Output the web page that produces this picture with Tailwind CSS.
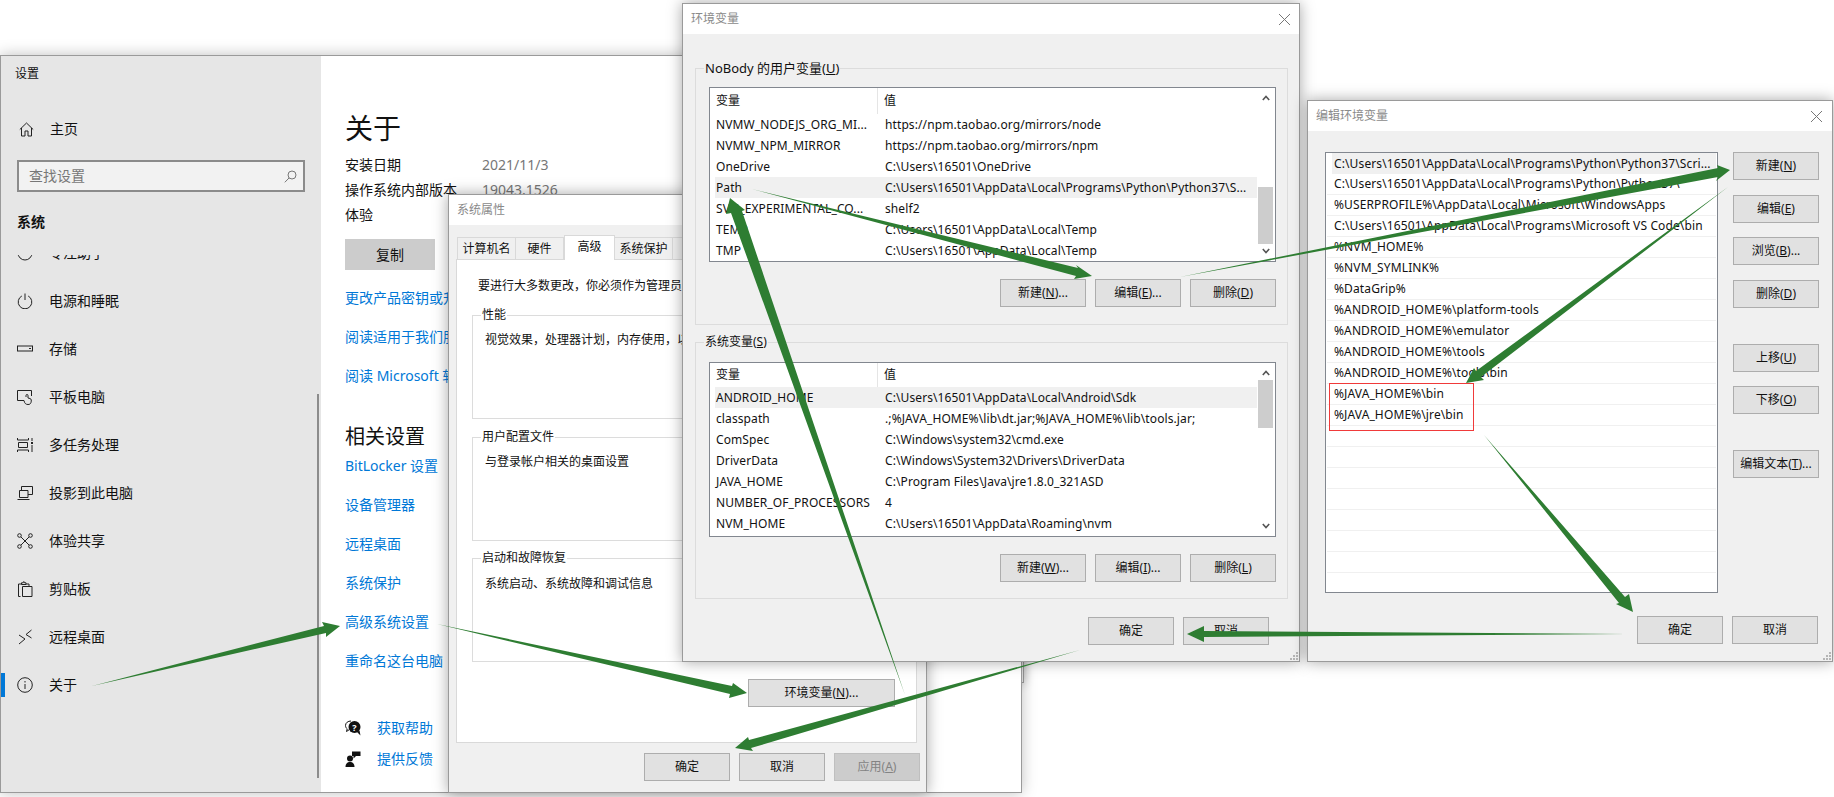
<!doctype html>
<html lang="zh-CN"><head><meta charset="utf-8"><title>环境变量配置</title>
<script src="https://cdn.jsdelivr.net/npm/@tailwindcss/browser@4"></script></head>
<body class="bg-white">
<div class="relative w-[1834px] h-[797px] overflow-hidden bg-white text-[12px] leading-none text-[#111] font-['Noto_Sans','Noto_Sans_CJK_SC',sans-serif]">

<!-- window behind settings -->
<div class="absolute left-[600px] top-[100px] w-[424px] h-[583px] bg-[#f0f0f0] border border-[#a0a0a0] shadow-[0_0_10px_rgba(0,0,0,0.3)]"></div>

<!-- settings -->
<div class="absolute left-0 top-[55px] w-[1022px] h-[738px] flex bg-white border border-[#9a9a9a] shadow-[0_0_14px_rgba(0,0,0,0.25)]">
  <aside class="relative w-[320px] h-full bg-[#e6e6e6] flex flex-col shrink-0">
    <div class="h-[35px] pl-[14px] flex items-center">设置</div>
    <div class="mt-[14px] h-[48px] pl-[18px] flex items-center gap-[16px] text-[14px]">
      <svg class="w-[15px] h-[15px]" viewBox="0 0 15 15" fill="none" stroke="#222"><path d="M.8 7.500 7.500 1l6.700 6.500M2.500 6v8h3.500V9h3v5h3.500V6"/></svg><span>主页</span>
    </div>
    <div class="mt-[7px] ml-[16px] w-[288px] h-[32px] border-2 border-[#8b8b8b] bg-[#f2f2f2] flex items-center justify-between pl-[10px] pr-[6px] text-[14px] text-[#777]">
      <span>查找设置</span>
      <svg class="w-[13px] h-[13px]" viewBox="0 0 13 13" fill="none" stroke="#777"><circle cx="8" cy="5" r="4"/><path d="M5 8 .8 12.300"/></svg>
    </div>
    <div class="mt-[18px] h-[24px] pl-[16px] flex items-center text-[14px] font-bold">系统</div>
    <nav class="mt-[21px] flex-1 overflow-hidden text-[14px]">
      <div class="-mt-[26px] flex flex-col">
        <div class="h-[48px] pl-[16px] flex items-center gap-[16px]"><svg class="w-[16px] h-[16px]" viewBox="0 0 16 16" fill="none" stroke="#222"><path d="M1 8a7 7 0 0 0 14 0"/></svg><span>专注助手</span></div>
        <div class="h-[48px] pl-[16px] flex items-center gap-[16px]"><svg class="w-[16px] h-[16px]" viewBox="0 0 16 16" fill="none" stroke="#222"><path d="M4.800 3a6.800 6.800 0 1 0 6.400 0M8 .5V7"/></svg><span>电源和睡眠</span></div>
        <div class="h-[48px] pl-[16px] flex items-center gap-[16px]"><svg class="w-[16px] h-[16px]" viewBox="0 0 16 16" fill="none" stroke="#222"><rect x=".5" y="5" width="15" height="5"/><path d="M12 7.500h2"/></svg><span>存储</span></div>
        <div class="h-[48px] pl-[16px] flex items-center gap-[16px]"><svg class="w-[16px] h-[16px]" viewBox="0 0 16 16" fill="none" stroke="#222"><path d="M7 11.500H.5v-10h14V7"/><path d="M9 8V6.500a1 1 0 0 1 2 0V9l2 .5c1.500.5 1.500 2 1 4-.5 1.500-1.500 2-3 2-2 0-3.500-1-4-4"/></svg><span>平板电脑</span></div>
        <div class="h-[48px] pl-[16px] flex items-center gap-[16px]"><svg class="w-[16px] h-[16px]" viewBox="0 0 16 16" fill="none" stroke="#222"><path d="M.5 1v2h11V1M1.500 5.500h9v5h-9zM.5 15v-2h11v2M15 1v3M15 8v7"/><rect x="14" y="5" width="2" height="2" fill="#222" stroke="none"/></svg><span>多任务处理</span></div>
        <div class="h-[48px] pl-[16px] flex items-center gap-[16px]"><svg class="w-[16px] h-[16px]" viewBox="0 0 16 16" fill="none" stroke="#222"><path d="M4.500 5V1.500h11v8H11"/><path d="M2.500 5.500h8.500v7H2.500zM.5 14.500h12"/></svg><span>投影到此电脑</span></div>
        <div class="h-[48px] pl-[16px] flex items-center gap-[16px]"><svg class="w-[16px] h-[16px]" viewBox="0 0 16 16" fill="none" stroke="#222"><circle cx="2.500" cy="2.500" r="1.800"/><circle cx="13.500" cy="2.500" r="1.800"/><circle cx="2.500" cy="13.500" r="1.800"/><circle cx="13.500" cy="13.500" r="1.800"/><path d="m4 4 8 8M12 4l-8 8"/></svg><span>体验共享</span></div>
        <div class="h-[48px] pl-[16px] flex items-center gap-[16px]"><svg class="w-[16px] h-[16px]" viewBox="0 0 16 16" fill="none" stroke="#222"><path d="M3.500 15.500H1.500V3h3M9 3h3v2"/><path d="M4.500 3.500V1.800h1.700L6.800 .5l.8 1.300H9v1.700zM5.500 5.500h9.500v10H5.500z"/></svg><span>剪贴板</span></div>
        <div class="h-[48px] pl-[16px] flex items-center gap-[16px]"><svg class="w-[16px] h-[16px]" viewBox="0 0 16 16" fill="none" stroke="#222"><path d="m2 6 6 4-6 5M14.500 1 9 5.500l5.500 3.500"/></svg><span>远程桌面</span></div>
        <div class="relative h-[48px] pl-[16px] flex items-center gap-[16px]"><span class="absolute left-0 top-[12px] w-[4px] h-[24px] bg-[#0078d7]"></span><svg class="w-[16px] h-[16px]" viewBox="0 0 16 16" fill="none" stroke="#222"><circle cx="8" cy="8" r="7.300"/><path d="M8 7v5M8 4v1.500"/></svg><span>关于</span></div>
      </div>
    </nav>
    <span class="absolute left-[316px] top-[338px] w-[2px] h-[384px] bg-[#8c8c8c]"></span>
  </aside>
  <main class="flex-1 pl-[24px] flex flex-col items-start text-[14px] whitespace-nowrap">
    <h1 class="mt-[54px] h-[36px] flex items-center text-[28px]">关于</h1>
    <div class="mt-[6px] h-[25px] flex items-center"><span class="w-[137px]">安装日期</span><span class="text-[#777]">2021/11/3</span></div>
    <div class="h-[25px] flex items-center"><span class="w-[137px]">操作系统内部版本</span><span class="text-[#777]">19043.1526</span></div>
    <div class="h-[25px] flex items-center">体验</div>
    <div class="mt-[12px] w-[90px] h-[31px] bg-[#cccccc] flex items-center justify-center">复制</div>
    <a class="mt-[17px] h-[22px] flex items-center text-[#0078d7]">更改产品密钥或升级 Windows</a>
    <a class="mt-[17px] h-[22px] flex items-center text-[#0078d7]">阅读适用于我们服务的 Microsoft 服务协议</a>
    <a class="mt-[17px] h-[22px] flex items-center text-[#0078d7]">阅读 Microsoft 软件许可条款</a>
    <h2 class="mt-[36px] h-[28px] flex items-center text-[20px]">相关设置</h2>
    <a class="mt-[1px] h-[28px] flex items-center text-[#0078d7]">BitLocker 设置</a>
    <a class="mt-[11px] h-[28px] flex items-center text-[#0078d7]">设备管理器</a>
    <a class="mt-[11px] h-[28px] flex items-center text-[#0078d7]">远程桌面</a>
    <a class="mt-[11px] h-[28px] flex items-center text-[#0078d7]">系统保护</a>
    <a class="mt-[11px] h-[28px] flex items-center text-[#0078d7]">高级系统设置</a>
    <a class="mt-[11px] h-[28px] flex items-center text-[#0078d7]">重命名这台电脑</a>
    <div class="mt-[39px] h-[28px] flex items-center gap-[16px] text-[#0078d7]">
      <svg class="w-[16px] h-[16px]" viewBox="0 0 16 16"><path d="M6 1C3 1 .5 2.800.5 5.500c0 1.500.8 2.700 1.700 3.400L1.500 11.500 4.500 9.500" fill="none" stroke="#111"/><circle cx="9.500" cy="7" r="6" fill="#111"/><path d="m12 12 3.500 3.500-1-5z" fill="#111"/><text x="9.500" y="10.500" font-size="9" font-weight="700" fill="#fff" text-anchor="middle">?</text></svg><span>获取帮助</span>
    </div>
    <div class="mt-[3px] h-[28px] flex items-center gap-[16px] text-[#0078d7]">
      <svg class="w-[16px] h-[16px]" viewBox="0 0 16 16" fill="#111"><circle cx="5" cy="7.500" r="3"/><path d="M.5 16c0-3.500 2-5 4.500-5s4.500 1.500 4.500 5z"/><path d="M7 .5h8.500V5H11L8.500 7.500V5H7z"/></svg><span>提供反馈</span>
    </div>
  </main>
</div>

<!-- system properties -->
<div class="absolute left-[448px] top-[194px] w-[479px] h-[599px] bg-[#f0f0f0] border border-[#9a9a9a] shadow-[0_0_14px_rgba(0,0,0,0.35)] flex flex-col">
  <div class="h-[30px] bg-white flex items-center pl-[8px] text-[#8a8a8a] shrink-0">系统属性</div>
  <div class="mt-[10px] ml-[8px] flex items-end h-[24px] shrink-0">
    <span class="w-[59px] h-[22px] bg-[#f0f0f0] border border-b-0 border-[#d9d9d9] flex items-center justify-center">计算机名</span>
    <span class="w-[48px] h-[22px] bg-[#f0f0f0] border border-b-0 border-l-0 border-[#d9d9d9] flex items-center justify-center">硬件</span>
    <span class="w-[51px] h-[25px] bg-white border border-b-0 border-[#d9d9d9] flex items-center justify-center pb-[3px] z-10 -mb-px">高级</span>
    <span class="w-[58px] h-[22px] bg-[#f0f0f0] border border-b-0 border-l-0 border-[#d9d9d9] flex items-center justify-center">系统保护</span>
    <span class="w-[48px] h-[22px] bg-[#f0f0f0] border border-b-0 border-l-0 border-[#d9d9d9] flex items-center justify-center">远程</span>
  </div>
  <div class="ml-[7px] w-[461px] h-[484px] bg-white border border-[#d9d9d9] shrink-0 flex flex-col px-[15px]">
    <p class="mt-[19px] h-[14px] pl-[6px] flex items-center">要进行大多数更改，你必须作为管理员登录。</p>
    <div class="relative mt-[22px] h-[104px] border border-[#dcdcdc] pl-[12px] pt-[18px]"><span class="absolute left-[8px] -top-[7px] bg-white px-[1px]">性能</span>视觉效果，处理器计划，内存使用，以及虚拟内存</div>
    <div class="relative mt-[18px] h-[104px] border border-[#dcdcdc] pl-[12px] pt-[18px]"><span class="absolute left-[8px] -top-[7px] bg-white px-[1px]">用户配置文件</span>与登录帐户相关的桌面设置</div>
    <div class="relative mt-[17px] h-[104px] border border-[#dcdcdc] pl-[12px] pt-[19px]"><span class="absolute left-[8px] -top-[7px] bg-white px-[1px]">启动和故障恢复</span>系统启动、系统故障和调试信息</div>
    <div class="mt-[17px] self-end mr-[6px] w-[147px] h-[28px] bg-[#e1e1e1] border border-[#adadad] flex items-center justify-center">环境变量(<u>N</u>)...</div>
  </div>
  <div class="mt-[10px] ml-[195px] flex gap-[9px]">
    <span class="w-[86px] h-[28px] bg-[#e1e1e1] border border-[#adadad] flex items-center justify-center">确定</span>
    <span class="w-[86px] h-[28px] bg-[#e1e1e1] border border-[#adadad] flex items-center justify-center">取消</span>
    <span class="w-[86px] h-[28px] bg-[#cccccc] border border-[#bfbfbf] flex items-center justify-center text-[#838383]">应用(<u>A</u>)</span>
  </div>
</div>

<!-- environment variables -->
<div class="absolute left-[682px] top-[3px] w-[618px] h-[659px] bg-[#f0f0f0] border border-[#9a9a9a] shadow-[0_0_14px_rgba(0,0,0,0.35)] flex flex-col">
  <div class="h-[30px] bg-white flex items-center justify-between pl-[8px] pr-[9px] text-[#8a8a8a] shrink-0"><span>环境变量</span><svg class="w-[11px] h-[11px]" viewBox="0 0 11 11" stroke="#777"><path d="m0 0 11 11M11 0 0 11"/></svg></div>
  <section class="relative mt-[34px] ml-[12px] w-[593px] h-[257px] border border-[#dcdcdc] pt-[18px] pl-[13px]">
    <span class="absolute left-[8px] -top-[7px] bg-[#f0f0f0] px-[1px] text-[13px]">NoBody 的用户变量(<u>U</u>)</span>
    <div class="relative w-[567px] h-[175px] bg-white border border-[#82878f] pl-[5px] flex flex-col whitespace-nowrap tracking-[0.1px]">
      <div class="h-[26px] flex items-center shrink-0"><span class="w-[163px] h-full pl-[1px] flex items-center border-r border-[#e5e5e5]">变量</span><span class="pl-[6px]">值</span></div>
      <div class="h-[21px] flex items-center"><span class="w-[170px] pl-[1px] overflow-hidden">NVMW_NODEJS_ORG_MI...</span><span>https://npm.taobao.org/mirrors/node</span></div>
      <div class="h-[21px] flex items-center"><span class="w-[170px] pl-[1px]">NVMW_NPM_MIRROR</span><span>https://npm.taobao.org/mirrors/npm</span></div>
      <div class="h-[21px] flex items-center"><span class="w-[170px] pl-[1px]">OneDrive</span><span>C:\Users\16501\OneDrive</span></div>
      <div class="h-[21px] w-[542px] flex items-center bg-[#f0f0f0]"><span class="w-[170px] pl-[1px]">Path</span><span>C:\Users\16501\AppData\Local\Programs\Python\Python37\S...</span></div>
      <div class="h-[21px] flex items-center"><span class="w-[170px] pl-[1px]">SVN_EXPERIMENTAL_CO...</span><span>shelf2</span></div>
      <div class="h-[21px] flex items-center"><span class="w-[170px] pl-[1px]">TEMP</span><span>C:\Users\16501\AppData\Local\Temp</span></div>
      <div class="h-[21px] flex items-center"><span class="w-[170px] pl-[1px]">TMP</span><span>C:\Users\16501\AppData\Local\Temp</span></div>
      <div class="absolute right-0 top-0 bottom-0 w-[18px] bg-white flex flex-col items-center justify-between py-[7px]">
        <svg class="w-[8px] h-[6px]" viewBox="0 0 8 6" fill="none" stroke="#555" stroke-width="1.600"><path d="m.8 5 3.200-3.500L7.200 5"/></svg>
        <svg class="w-[8px] h-[6px]" viewBox="0 0 8 6" fill="none" stroke="#555" stroke-width="1.600"><path d="m.8 1 3.200 3.500L7.200 1"/></svg>
        <span class="absolute left-[1px] top-[99px] w-[15px] h-[57px] bg-[#cdcdcd]"></span>
      </div>
    </div>
    <div class="mt-[17px] ml-[291px] flex gap-[9px]">
      <span class="w-[86px] h-[28px] bg-[#e1e1e1] border border-[#adadad] flex items-center justify-center">新建(<u>N</u>)...</span>
      <span class="w-[86px] h-[28px] bg-[#e1e1e1] border border-[#adadad] flex items-center justify-center">编辑(<u>E</u>)...</span>
      <span class="w-[86px] h-[28px] bg-[#e1e1e1] border border-[#adadad] flex items-center justify-center">删除(<u>D</u>)</span>
    </div>
  </section>
  <section class="relative mt-[17px] ml-[12px] w-[593px] h-[257px] border border-[#dcdcdc] pt-[19px] pl-[13px]">
    <span class="absolute left-[8px] -top-[7px] bg-[#f0f0f0] px-[1px]">系统变量(<u>S</u>)</span>
    <div class="relative w-[567px] h-[175px] bg-white border border-[#82878f] pl-[5px] flex flex-col whitespace-nowrap tracking-[0.1px]">
      <div class="h-[24px] flex items-center shrink-0"><span class="w-[163px] h-full pl-[1px] flex items-center border-r border-[#e5e5e5]">变量</span><span class="pl-[6px]">值</span></div>
      <div class="h-[21px] w-[542px] flex items-center bg-[#f0f0f0]"><span class="w-[170px] pl-[1px]">ANDROID_HOME</span><span>C:\Users\16501\AppData\Local\Android\Sdk</span></div>
      <div class="h-[21px] flex items-center"><span class="w-[170px] pl-[1px]">classpath</span><span>.;%JAVA_HOME%\lib\dt.jar;%JAVA_HOME%\lib\tools.jar;</span></div>
      <div class="h-[21px] flex items-center"><span class="w-[170px] pl-[1px]">ComSpec</span><span>C:\Windows\system32\cmd.exe</span></div>
      <div class="h-[21px] flex items-center"><span class="w-[170px] pl-[1px]">DriverData</span><span>C:\Windows\System32\Drivers\DriverData</span></div>
      <div class="h-[21px] flex items-center"><span class="w-[170px] pl-[1px]">JAVA_HOME</span><span>C:\Program Files\Java\jre1.8.0_321ASD</span></div>
      <div class="h-[21px] flex items-center"><span class="w-[170px] pl-[1px]">NUMBER_OF_PROCESSORS</span><span>4</span></div>
      <div class="h-[21px] flex items-center"><span class="w-[170px] pl-[1px]">NVM_HOME</span><span>C:\Users\16501\AppData\Roaming\nvm</span></div>
      <div class="absolute right-0 top-0 bottom-0 w-[18px] bg-white flex flex-col items-center justify-between py-[7px]">
        <svg class="w-[8px] h-[6px]" viewBox="0 0 8 6" fill="none" stroke="#555" stroke-width="1.600"><path d="m.8 5 3.200-3.500L7.200 5"/></svg>
        <svg class="w-[8px] h-[6px]" viewBox="0 0 8 6" fill="none" stroke="#555" stroke-width="1.600"><path d="m.8 1 3.200 3.500L7.200 1"/></svg>
        <span class="absolute left-[1px] top-[17px] w-[15px] h-[48px] bg-[#cdcdcd]"></span>
      </div>
    </div>
    <div class="mt-[17px] ml-[291px] flex gap-[9px]">
      <span class="w-[86px] h-[28px] bg-[#e1e1e1] border border-[#adadad] flex items-center justify-center">新建(<u>W</u>)...</span>
      <span class="w-[86px] h-[28px] bg-[#e1e1e1] border border-[#adadad] flex items-center justify-center">编辑(<u>I</u>)...</span>
      <span class="w-[86px] h-[28px] bg-[#e1e1e1] border border-[#adadad] flex items-center justify-center">删除(<u>L</u>)</span>
    </div>
  </section>
  <div class="mt-[18px] ml-[405px] flex gap-[9px]">
    <span class="w-[86px] h-[28px] bg-[#e1e1e1] border border-[#adadad] flex items-center justify-center">确定</span>
    <span class="w-[86px] h-[28px] bg-[#e1e1e1] border border-[#adadad] flex items-center justify-center">取消</span>
  </div>
  <svg class="absolute right-[1px] bottom-[1px] w-[9px] h-[9px]" viewBox="0 0 9 9" fill="#b5b5b5"><rect x="7" y="1" width="2" height="2"/><rect x="4" y="4" width="2" height="2"/><rect x="7" y="4" width="2" height="2"/><rect x="1" y="7" width="2" height="2"/><rect x="4" y="7" width="2" height="2"/><rect x="7" y="7" width="2" height="2"/></svg>
</div>

<!-- edit environment variable -->
<div class="absolute left-[1307px] top-[100px] w-[526px] h-[562px] bg-[#f0f0f0] border border-[#9a9a9a] shadow-[0_0_14px_rgba(0,0,0,0.35)] flex flex-col">
  <div class="h-[30px] bg-white flex items-center justify-between pl-[8px] pr-[10px] text-[#8a8a8a] shrink-0"><span>编辑环境变量</span><svg class="w-[11px] h-[11px]" viewBox="0 0 11 11" stroke="#777"><path d="m0 0 11 11M11 0 0 11"/></svg></div>
  <div class="mt-[21px] ml-[17px] flex items-start">
    <div class="w-[393px] h-[441px] bg-white border border-[#82878f] px-[1px] flex flex-col whitespace-nowrap tracking-[0.12px]">
      <div class="h-[21px] ml-[5px] shrink-0 pl-[2px] flex items-center bg-[#f0f0f0]">C:\Users\16501\AppData\Local\Programs\Python\Python37\Scri...</div>
      <div class="h-[21px] shrink-0 pl-[7px] flex items-center border-b border-[#f0f0f0]">C:\Users\16501\AppData\Local\Programs\Python\Python37\</div>
      <div class="h-[21px] shrink-0 pl-[7px] flex items-center border-b border-[#f0f0f0]">%USERPROFILE%\AppData\Local\Microsoft\WindowsApps</div>
      <div class="h-[21px] shrink-0 pl-[7px] flex items-center border-b border-[#f0f0f0]">C:\Users\16501\AppData\Local\Programs\Microsoft VS Code\bin</div>
      <div class="h-[21px] shrink-0 pl-[7px] flex items-center border-b border-[#f0f0f0]">%NVM_HOME%</div>
      <div class="h-[21px] shrink-0 pl-[7px] flex items-center border-b border-[#f0f0f0]">%NVM_SYMLINK%</div>
      <div class="h-[21px] shrink-0 pl-[7px] flex items-center border-b border-[#f0f0f0]">%DataGrip%</div>
      <div class="h-[21px] shrink-0 pl-[7px] flex items-center border-b border-[#f0f0f0]">%ANDROID_HOME%\platform-tools</div>
      <div class="h-[21px] shrink-0 pl-[7px] flex items-center border-b border-[#f0f0f0]">%ANDROID_HOME%\emulator</div>
      <div class="h-[21px] shrink-0 pl-[7px] flex items-center border-b border-[#f0f0f0]">%ANDROID_HOME%\tools</div>
      <div class="h-[21px] shrink-0 pl-[7px] flex items-center border-b border-[#f0f0f0]">%ANDROID_HOME%\tools\bin</div>
      <div class="h-[21px] shrink-0 pl-[7px] flex items-center border-b border-[#f0f0f0]">%JAVA_HOME%\bin</div>
      <div class="h-[21px] shrink-0 pl-[7px] flex items-center border-b border-[#f0f0f0]">%JAVA_HOME%\jre\bin</div>
      <div class="h-[21px] shrink-0 border-b border-[#f0f0f0]"></div>
      <div class="h-[21px] shrink-0 border-b border-[#f0f0f0]"></div>
      <div class="h-[21px] shrink-0 border-b border-[#f0f0f0]"></div>
      <div class="h-[21px] shrink-0 border-b border-[#f0f0f0]"></div>
      <div class="h-[21px] shrink-0 border-b border-[#f0f0f0]"></div>
      <div class="h-[21px] shrink-0 border-b border-[#f0f0f0]"></div>
      <div class="h-[21px] shrink-0 border-b border-[#f0f0f0]"></div>
    </div>
    <div class="ml-[15px] w-[86px] flex flex-col">
      <span class="h-[28px] bg-[#e1e1e1] border border-[#adadad] flex items-center justify-center">新建(<u>N</u>)</span>
      <span class="mt-[15px] h-[28px] bg-[#e1e1e1] border border-[#adadad] flex items-center justify-center">编辑(<u>E</u>)</span>
      <span class="mt-[14px] h-[28px] bg-[#e1e1e1] border border-[#adadad] flex items-center justify-center">浏览(<u>B</u>)...</span>
      <span class="mt-[15px] h-[28px] bg-[#e1e1e1] border border-[#adadad] flex items-center justify-center">删除(<u>D</u>)</span>
      <span class="mt-[36px] h-[28px] bg-[#e1e1e1] border border-[#adadad] flex items-center justify-center">上移(<u>U</u>)</span>
      <span class="mt-[14px] h-[28px] bg-[#e1e1e1] border border-[#adadad] flex items-center justify-center">下移(<u>O</u>)</span>
      <span class="mt-[36px] h-[28px] bg-[#e1e1e1] border border-[#adadad] flex items-center justify-center">编辑文本(<u>T</u>)...</span>
    </div>
  </div>
  <div class="mt-[23px] ml-[329px] flex gap-[9px]">
    <span class="w-[86px] h-[28px] bg-[#e1e1e1] border border-[#adadad] flex items-center justify-center">确定</span>
    <span class="w-[86px] h-[28px] bg-[#e1e1e1] border border-[#adadad] flex items-center justify-center">取消</span>
  </div>
  <svg class="absolute right-[1px] bottom-[1px] w-[9px] h-[9px]" viewBox="0 0 9 9" fill="#b5b5b5"><rect x="7" y="1" width="2" height="2"/><rect x="4" y="4" width="2" height="2"/><rect x="7" y="4" width="2" height="2"/><rect x="1" y="7" width="2" height="2"/><rect x="4" y="7" width="2" height="2"/><rect x="7" y="7" width="2" height="2"/></svg>
</div>

<!-- red highlight -->
<div class="absolute left-[1329px] top-[383px] w-[145px] h-[48px] border border-[#f03a3a]"></div>

<!-- arrows -->
<svg class="absolute inset-0 w-[1834px] h-[797px] pointer-events-none" viewBox="0 0 1834 797" fill="#2e7d32">
  <polygon points="92,686 324,626 322,622 340,626 326,637 326,633"/>
  <polygon points="437,624 732,686 733,683 747,693 729,698 730,694"/>
  <polygon points="905,695 742,211 745,210 730,198 726,214 731,213"/>
  <polygon points="752,189 1078,268 1076,265 1092,276 1074,279 1076,276"/>
  <polygon points="1180,277 1718,168 1717,165 1730,170 1716,181 1718,177"/>
  <polygon points="1728,187 1476,371 1474,368 1466,383 1484,380 1481,377"/>
  <polygon points="1484,435 1625,597 1629,594 1633,612 1616,604 1619,603"/>
  <polygon points="1626,634 1204,631 1204,626 1187,634 1204,642 1204,637"/>
  <polygon points="1080,650 749,740 748,737 735,748 753,751 751,748"/>
</svg>
</div>
</body></html>
